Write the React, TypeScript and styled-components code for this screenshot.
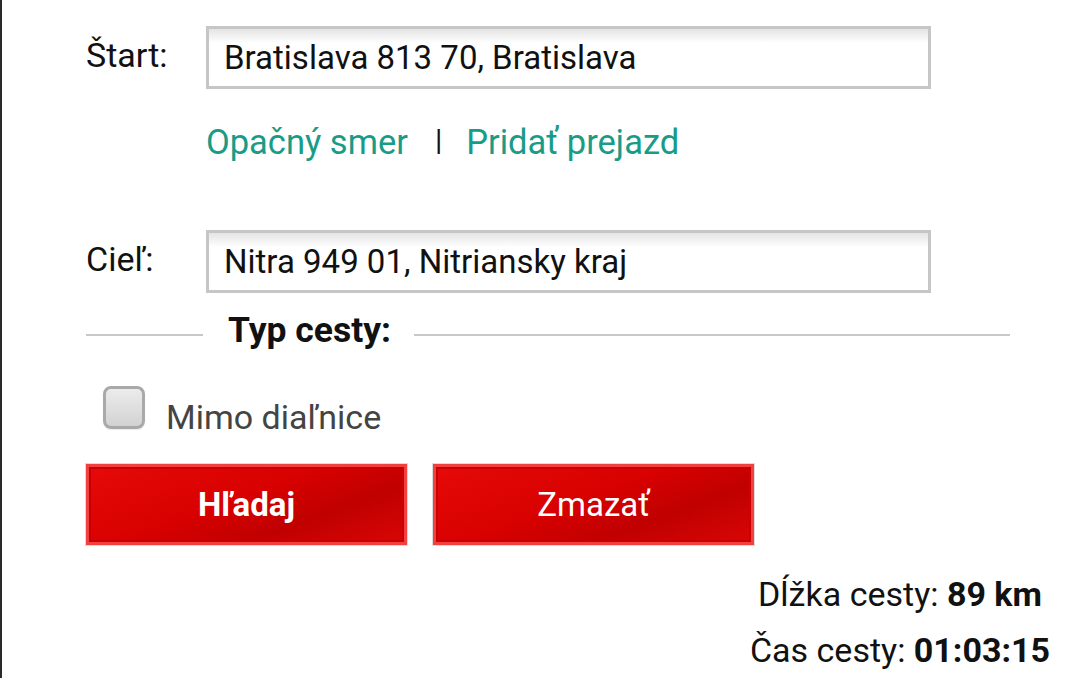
import styled, { createGlobalStyle } from 'styled-components'

const Global = createGlobalStyle`
  html, body {
    margin: 0;
    padding: 0;
    background: #fff;
  }
  body {
    font-family: Roboto, 'Noto Sans', 'Liberation Sans', sans-serif;
    color: #111;
  }
`

const Page = styled.div`
  height: 678px;
  box-sizing: border-box;
  border-left: 2px solid #2a2a2a;
  padding: 26px 0 0 84px;
  overflow: hidden;
`

const FieldRow = styled.div<{ $top?: number }>`
  display: grid;
  grid-template-columns: 120px 725px;
  align-items: start;
  margin-top: ${(p) => p.$top ?? 0}px;
`

const Label = styled.label`
  font-size: 34px;
  line-height: 63px;
  margin-top: -2px;
  color: #111;
`

const AddressInput = styled.div`
  height: 63px;
  box-sizing: border-box;
  border: 3px solid #c6c6c6;
  background: linear-gradient(#e4e4e4 0, #fff 14px, #fff 100%);
  padding: 0 15px;
  font-size: 33px;
  line-height: 57px;
  color: #111;
  white-space: nowrap;
`

const LinkRow = styled.div`
  display: flex;
  align-items: center;
  margin: 33px 0 0 120px;
  font-size: 34.5px;
  line-height: 40px;
`

const TextLink = styled.a`
  color: #189c88;
  text-decoration: none;
`

const Divider = styled.span`
  color: #111;
  font-size: 30px;
  margin: -4px 24px 0 27px;
`

const Legend = styled.div`
  display: flex;
  align-items: center;
  width: 924px;
  margin-top: 17px;
  height: 40px;
`

const Rule = styled.div<{ $w?: number }>`
  height: 2px;
  background: #c8c8c8;
  ${(p) => (p.$w ? `width: ${p.$w}px;` : 'flex: 1;')}
  margin-top: 10px;
`

const LegendText = styled.div`
  font-size: 35.5px;
  font-weight: 700;
  margin: 0 23px 0 25px;
  color: #111;
`

const CheckRow = styled.label`
  display: flex;
  align-items: flex-start;
  margin: 36px 0 0 17px;
`

const CheckBox = styled.span`
  width: 42px;
  height: 43px;
  box-sizing: border-box;
  border: 3px solid #a9a9a9;
  border-radius: 8px;
  background: linear-gradient(#ececec, #d2d2d2);
  box-shadow: 0 1px 1px rgba(0, 0, 0, 0.08);
`

const CheckLabel = styled.span`
  font-size: 34px;
  line-height: 40px;
  color: #444;
  margin: 11px 0 0 21px;
`

const Buttons = styled.div`
  display: flex;
  gap: 26px;
  margin-top: 27px;
`

const RedButton = styled.button<{ $bold?: boolean }>`
  width: 321px;
  height: 81px;
  box-sizing: border-box;
  border: 3px solid #f04040;
  outline: 1px solid #dcdcdc;
  background: linear-gradient(160deg, #e60a0a 0%, #d80000 45%, #c00000 70%, #d80606 100%);
  box-shadow: inset 0 0 0 2px #cc0000;
  color: #fff;
  font-family: Roboto, 'Noto Sans', sans-serif;
  font-size: 33px;
  font-weight: ${(p) => (p.$bold ? 700 : 400)};
  cursor: pointer;
`

const Results = styled.div`
  width: 340px;
  margin: 21px 0 0 644px;
  text-align: center;
  font-size: 34px;
  line-height: 56px;
  color: #111;
`

export default function App() {
  return (
    <Page>
      <Global />
      <FieldRow>
        <Label>Štart:</Label>
        <AddressInput>Bratislava 813 70, Bratislava</AddressInput>
      </FieldRow>
      <LinkRow>
        <TextLink href="#">Opačný smer</TextLink>
        <Divider>|</Divider>
        <TextLink href="#">Pridať prejazd</TextLink>
      </LinkRow>
      <FieldRow $top={68}>
        <Label>Cieľ:</Label>
        <AddressInput>Nitra 949 01, Nitriansky kraj</AddressInput>
      </FieldRow>
      <Legend>
        <Rule $w={117} />
        <LegendText>Typ cesty:</LegendText>
        <Rule />
      </Legend>
      <CheckRow>
        <CheckBox />
        <CheckLabel>Mimo diaľnice</CheckLabel>
      </CheckRow>
      <Buttons>
        <RedButton $bold>Hľadaj</RedButton>
        <RedButton>Zmazať</RedButton>
      </Buttons>
      <Results>
        <div>
          Dĺžka cesty: <b>89 km</b>
        </div>
        <div>
          Čas cesty: <b>01:03:15</b>
        </div>
      </Results>
    </Page>
  )
}
